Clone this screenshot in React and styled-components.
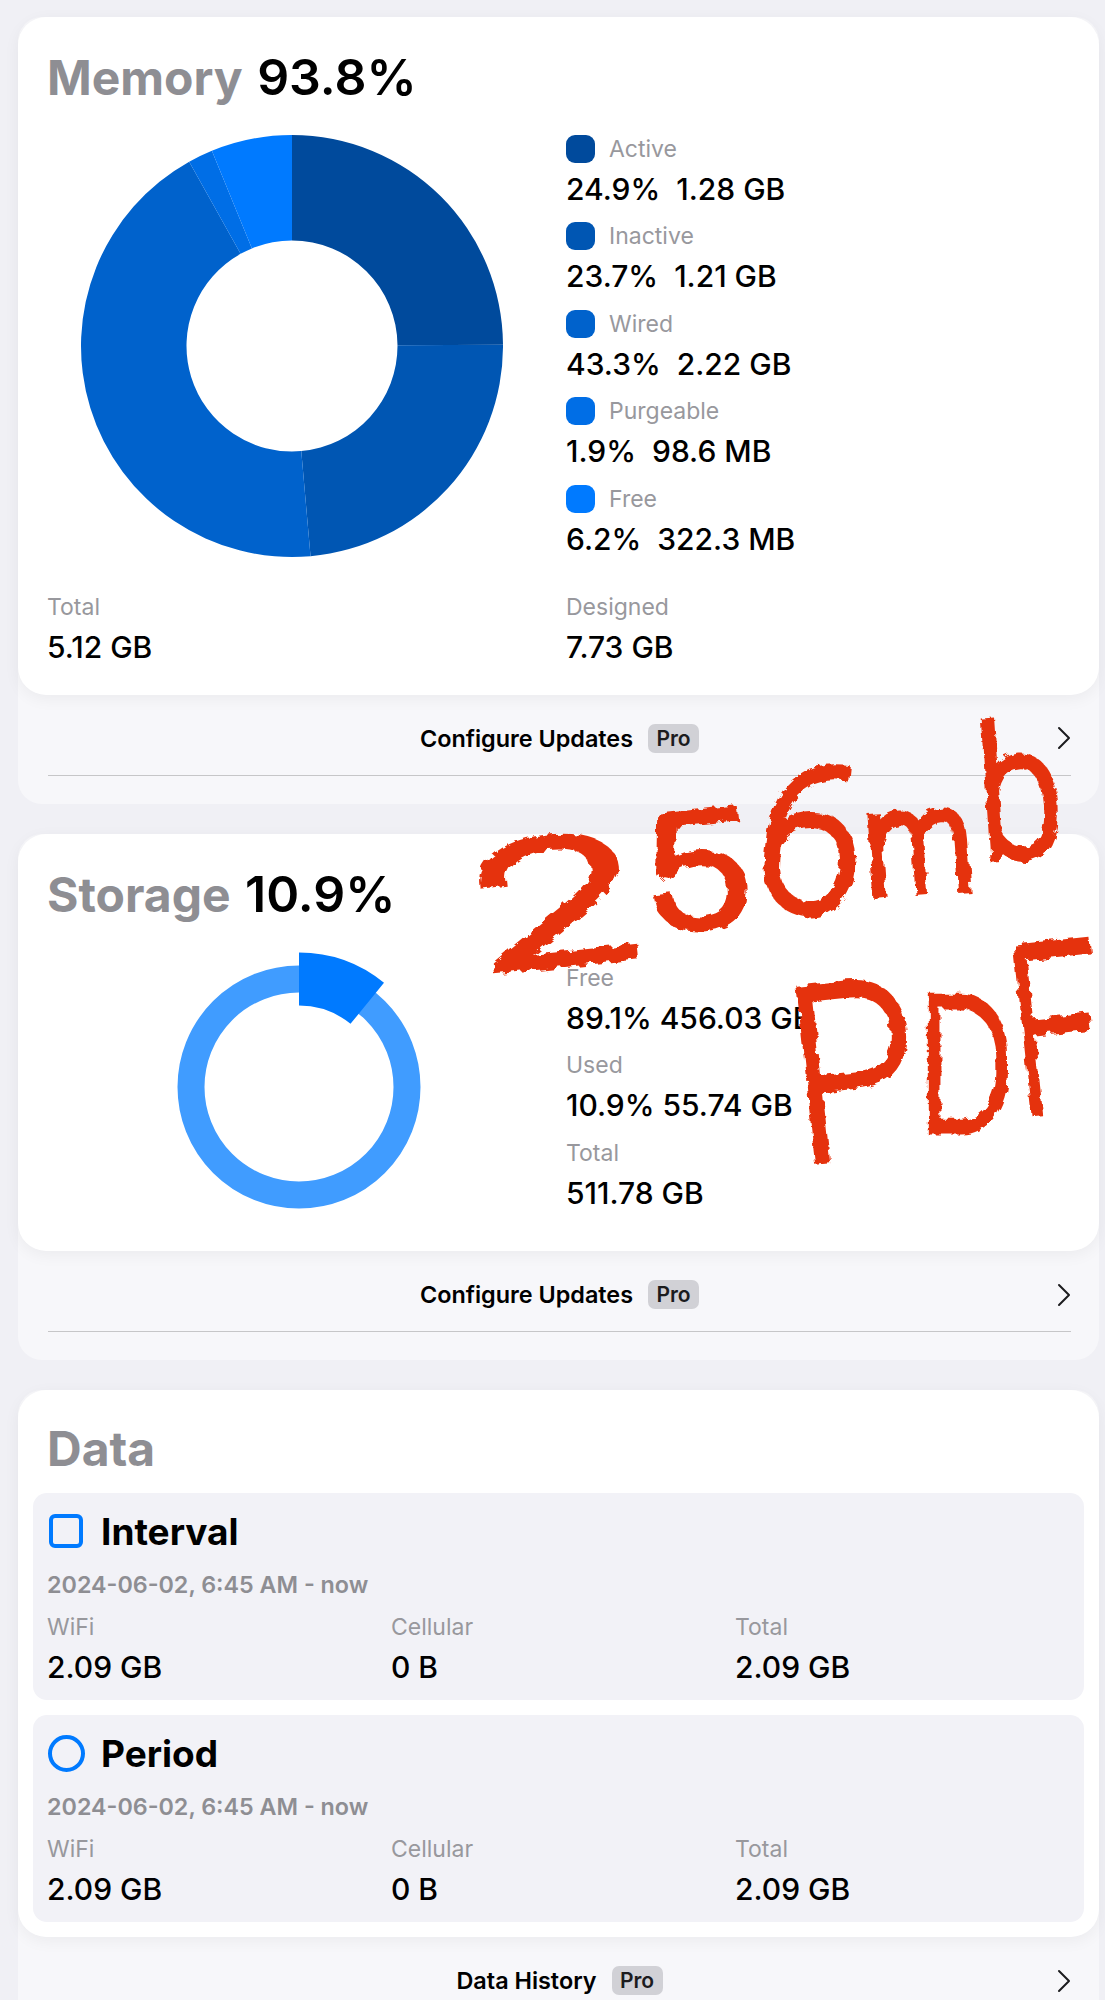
import styled, { createGlobalStyle } from "styled-components";

const GlobalStyle = createGlobalStyle`
  * { box-sizing: border-box; }
  html, body {
    margin: 0;
    background: #f0f0f5;
    font-family: Inter, "Noto Sans", sans-serif;
  }
`;

const memorySegments = [
  { name: "Active", pct: 24.9, size: "1.28 GB", color: "#004a9c" },
  { name: "Inactive", pct: 23.7, size: "1.21 GB", color: "#0056b3" },
  { name: "Wired", pct: 43.3, size: "2.22 GB", color: "#0062cc" },
  { name: "Purgeable", pct: 1.9, size: "98.6 MB", color: "#006ee6" },
  { name: "Free", pct: 6.2, size: "322.3 MB", color: "#007aff" },
];

const storageRows = [
  { name: "Free", value: "89.1% 456.03 GB" },
  { name: "Used", value: "10.9% 55.74 GB" },
  { name: "Total", value: "511.78 GB" },
];

const dataRows = [
  { title: "Interval", round: false },
  { title: "Period", round: true },
];

const inkWords = [
  {
    word: "256mb",
    letters: [
      { ch: "2", left: 466, top: 828, size: 170, sx: 1.75, rot: -6 },
      { ch: "5", left: 634, top: 802, size: 154, sx: 1.25, rot: -6 },
      { ch: "6", left: 770, top: 738, size: 198, sx: 0.95, rot: 6 },
      { ch: "m", left: 860, top: 776, size: 140, sx: 0.85, rot: -4 },
      { ch: "b", left: 972, top: 708, size: 178, sx: 0.85, rot: -4 },
    ],
  },
  {
    word: "PDF",
    letters: [
      { ch: "P", left: 778, top: 962, size: 238, sx: 0.88, rot: -6 },
      { ch: "D", left: 918, top: 976, size: 182, sx: 0.8, rot: 0 },
      { ch: "F", left: 1000, top: 922, size: 226, sx: 0.68, rot: -6 },
    ],
  },
];

// ring slice between two angles, 0deg is at 12 o'clock
const slice = (cx, cy, outer, inner, from, to) => {
  const pt = (r, a) => {
    const rad = ((a - 90) * Math.PI) / 180;
    return `${(cx + r * Math.cos(rad)).toFixed(2)} ${(cy + r * Math.sin(rad)).toFixed(2)}`;
  };
  const large = to - from > 180 ? 1 : 0;
  return `M${pt(outer, from)} A${outer} ${outer} 0 ${large} 1 ${pt(outer, to)} L${pt(inner, to)} A${inner} ${inner} 0 ${large} 0 ${pt(inner, from)} Z`;
};

const MemoryDonut = () => {
  let angle = 0;
  return (
    <Donut width="422" height="422" viewBox="0 0 422 422">
      {memorySegments.map((s) => {
        const from = angle;
        angle += (s.pct / 100) * 360;
        return <path key={s.name} d={slice(211, 211, 211, 105.5, from, angle)} fill={s.color} />;
      })}
    </Donut>
  );
};

const StorageRing = () => (
  <Ring width="270" height="270" viewBox="0 0 270 270">
    <circle cx="135" cy="135" r="108" fill="none" stroke="#409cff" strokeWidth="27" />
    <path d={slice(135, 135, 134.5, 81.5, 0, 39.2)} fill="#007aff" />
  </Ring>
);

const Footer = ({ label, last }) => (
  <FooterPanel $last={last}>
    <FooterRow>
      <FooterLabel>
        {label}
        <ProBadge>Pro</ProBadge>
      </FooterLabel>
      <Chevron width="14" height="24" viewBox="0 0 14 24">
        <path d="M2 2l10 10L2 22" fill="none" stroke="#1c1c1e" strokeWidth="2" strokeLinecap="round" strokeLinejoin="round" />
      </Chevron>
    </FooterRow>
  </FooterPanel>
);

const App = () => {
  return (
    <Page>
      <GlobalStyle />
      <Section>
        <Card>
          <Title>
            Memory <TitleValue>93.8%</TitleValue>
          </Title>
          <CardBody>
            <ChartSlot $left={34} $top={3}>
              <MemoryDonut />
            </ChartSlot>
            <div>
              {memorySegments.map((s) => (
                <LegendItem key={s.name}>
                  <LegendHead>
                    <Swatch $color={s.color} />
                    <Label>{s.name}</Label>
                  </LegendHead>
                  <Value>
                    {s.pct}%{"  "}
                    {s.size}
                  </Value>
                </LegendItem>
              ))}
            </div>
          </CardBody>
          <TotalsRow>
            <div>
              <Label>Total</Label>
              <Value>5.12 GB</Value>
            </div>
            <div>
              <Label>Designed</Label>
              <Value>7.73 GB</Value>
            </div>
          </TotalsRow>
        </Card>
        <Footer label="Configure Updates" />
      </Section>

      <Section>
        <Card>
          <Title>
            Storage <TitleValue>10.9%</TitleValue>
          </Title>
          <CardBody>
            <ChartSlot $left={117} $top={3}>
              <StorageRing />
            </ChartSlot>
            <StorageLegend>
              {storageRows.map((r) => (
                <LegendItem key={r.name}>
                  <Label>{r.name}</Label>
                  <Value>{r.value}</Value>
                </LegendItem>
              ))}
            </StorageLegend>
          </CardBody>
          <CardEnd />
        </Card>
        <Footer label="Configure Updates" />
      </Section>

      <Section>
        <DataCard>
          <DataTitle>Data</DataTitle>
          <DataList>
            {dataRows.map((row) => (
              <DataRow key={row.title}>
                <DataHead>
                  <ShapeSlot>
                    <Shape $round={row.round} />
                  </ShapeSlot>
                  <DataName>{row.title}</DataName>
                </DataHead>
                <DateLine>2024-06-02, 6:45 AM - now</DateLine>
                <DataGrid>
                  <div>
                    <Label>WiFi</Label>
                    <Value>2.09 GB</Value>
                  </div>
                  <div>
                    <Label>Cellular</Label>
                    <Value>0 B</Value>
                  </div>
                  <div>
                    <Label>Total</Label>
                    <Value>2.09 GB</Value>
                  </div>
                </DataGrid>
              </DataRow>
            ))}
          </DataList>
        </DataCard>
        <Footer label="Data History" last />
      </Section>

      {/* handwritten note on top of the screenshot */}
      <RoughDefs width="0" height="0">
        <filter id="rough" x="-10%" y="-10%" width="120%" height="120%">
          <feTurbulence type="fractalNoise" baseFrequency="0.09" numOctaves="3" seed="4" />
          <feDisplacementMap in="SourceGraphic" scale="9" />
        </filter>
      </RoughDefs>
      <Annotation>
        {inkWords.map((w) => (
          <div key={w.word}>
            {w.letters.map((l) => (
              <Ink key={l.ch} $left={l.left} $top={l.top} $size={l.size} $sx={l.sx} $rot={l.rot}>
                {l.ch}
              </Ink>
            ))}
          </div>
        ))}
      </Annotation>
    </Page>
  );
};

const Page = styled.div`
  position: relative;
  height: 2000px;
  overflow: hidden;
  padding: 17px 6px 0 18px;
  display: flex;
  flex-direction: column;
  gap: 30px;
  background: #f0f0f5;
`;

const Section = styled.section`
  background: #f7f7fa;
  border-radius: 24px;
`;

const Card = styled.div`
  background: #fff;
  border-radius: 28px;
  padding: 35px 28px 0 29px;
  box-shadow: 0 4px 16px rgba(0, 0, 0, 0.05);
`;

const DataCard = styled(Card)`
  padding: 34px 15px 15px;
`;

const Title = styled.h2`
  margin: 0 0 29px;
  font-size: 48px;
  line-height: 50px;
  font-weight: 700;
  color: #8e8e93;
  word-spacing: 3px;
`;

const TitleValue = styled.span`
  color: #000;
  font-size: 50px;
  font-weight: 600;
`;

const DataTitle = styled(Title)`
  margin: 0 0 19px 14px;
`;

const CardBody = styled.div`
  display: grid;
  grid-template-columns: 519px 1fr;
`;

const ChartSlot = styled.div`
  padding-left: ${(p) => p.$left}px;
  padding-top: ${(p) => p.$top}px;
`;

const Donut = styled.svg`
  display: block;
`;

const Ring = styled.svg`
  display: block;
`;

const LegendItem = styled.div`
  height: 87.4px;
`;

const StorageLegend = styled.div`
  padding-top: 12px;
`;

const LegendHead = styled.div`
  display: flex;
  align-items: center;
  gap: 14px;
`;

const Swatch = styled.span`
  width: 29px;
  height: 28px;
  border-radius: 9px;
  background: ${(p) => p.$color};
`;

const Label = styled.div`
  font-size: 23px;
  line-height: 34px;
  font-weight: 400;
  color: #98989d;
`;

const Value = styled.div`
  font-size: 30px;
  line-height: 46px;
  font-weight: 500;
  color: #000;
  white-space: pre;
`;

const TotalsRow = styled.div`
  display: grid;
  grid-template-columns: 519px 1fr;
  margin-top: 21px;
  padding-bottom: 25px;
`;

const CardEnd = styled.div`
  height: 28px;
`;

const FooterPanel = styled.div`
  height: ${(p) => (p.$last ? "120px" : "109px")};
  padding: 0 28px 0 30px;
`;

const FooterRow = styled.div`
  height: 81px;
  padding-top: 7px;
  display: grid;
  grid-template-columns: 1fr auto 1fr;
  align-items: center;
  border-bottom: 1px solid #c6c6c8;
`;

const FooterLabel = styled.div`
  grid-column: 2;
  display: flex;
  align-items: center;
  gap: 15px;
  font-size: 23.4px;
  font-weight: 600;
  color: #000;
`;

const ProBadge = styled.span`
  width: 51px;
  height: 29px;
  border-radius: 7px;
  background: #d1d1d6;
  display: flex;
  align-items: center;
  justify-content: center;
  font-size: 21px;
  color: #1c1c1e;
`;

const Chevron = styled.svg`
  grid-column: 3;
  justify-self: end;
`;

const DataList = styled.div`
  display: flex;
  flex-direction: column;
  gap: 15px;
`;

const DataRow = styled.div`
  height: 207px;
  padding: 14px 14px 10px;
  border-radius: 14px;
  background: #f2f2f7;
`;

const DataHead = styled.div`
  display: flex;
  align-items: center;
  gap: 16px;
  height: 48px;
`;

const ShapeSlot = styled.div`
  width: 38px;
  display: flex;
  justify-content: center;
`;

const Shape = styled.span`
  width: ${(p) => (p.$round ? "37px" : "34px")};
  height: ${(p) => (p.$round ? "37px" : "34px")};
  border: 4px solid #007aff;
  border-radius: ${(p) => (p.$round ? "50%" : "6px")};
`;

const DataName = styled.div`
  font-size: 37px;
  font-weight: 700;
  color: #000;
`;

const DateLine = styled.div`
  margin: 13px 0 8px;
  font-size: 23.3px;
  line-height: 34px;
  font-weight: 600;
  color: #8e8e93;
`;

const DataGrid = styled.div`
  display: grid;
  grid-template-columns: repeat(3, 344px);
`;

const RoughDefs = styled.svg`
  position: absolute;
`;

const Annotation = styled.div`
  position: absolute;
  inset: 0;
  pointer-events: none;
  filter: url(#rough);
`;

const Ink = styled.span`
  position: absolute;
  left: ${(p) => p.$left}px;
  top: ${(p) => p.$top}px;
  font-family: Roboto, Inter, sans-serif;
  font-size: ${(p) => p.$size}px;
  font-weight: 100;
  line-height: 1;
  color: #e5330f;
  -webkit-text-stroke: 11px #e5330f;
  transform-origin: top left;
  transform: rotate(${(p) => p.$rot}deg) scaleX(${(p) => p.$sx});
`;

export default App;
